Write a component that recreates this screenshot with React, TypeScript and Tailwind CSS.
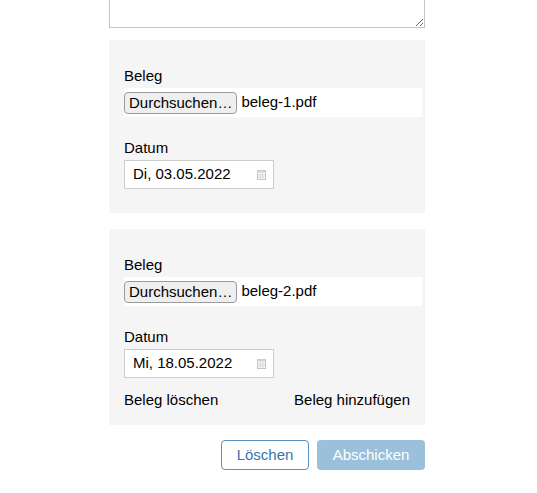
import React from 'react';

type Beleg = { file: string; date: string };

const BELEGE: Beleg[] = [
  { file: 'beleg-1.pdf', date: 'Di, 03.05.2022' },
  { file: 'beleg-2.pdf', date: 'Mi, 18.05.2022' },
];

function CalendarIcon() {
  return (
    <svg width="9" height="10" viewBox="0 0 9 10" className="shrink-0">
      <rect x="0.5" y="0.5" width="8" height="9" fill="none" stroke="#c4c4c4" />
      <rect x="0.5" y="0.5" width="8" height="2" fill="#d4d4d4" />
      <path d="M3.2 2.5V9.5M5.8 2.5V9.5M0.5 4.8H8.5M0.5 7.1H8.5" stroke="#d0d0d0" strokeWidth="0.8" />
    </svg>
  );
}

function BelegPanel({ beleg, last }: { beleg: Beleg; last: boolean }) {
  return (
    <div className={`bg-[#f5f5f5] px-[15px] pt-[25px] ${last ? 'pb-[15px]' : 'pb-[24px]'}`}>
      <label className="block leading-[21px] mb-[2px]">Beleg</label>
      <div className="flex items-center h-[29px] w-[298px] bg-white">
        <button
          type="button"
          className="h-[22px] px-[4px] leading-[20px] bg-[#efefef] border border-[#9a9a9a] rounded-[4px] text-black"
        >
          Durchsuchen…
        </button>
        <span className="ml-[4px]">{beleg.file}</span>
      </div>

      <label className="block leading-[21px] mt-[20px] mb-[2px]">Datum</label>
      <div className="flex items-center justify-between w-[150px] h-[29px] pl-[8px] pr-[7px] bg-white border border-[#cdcdcd]">
        <span>{beleg.date}</span>
        <CalendarIcon />
      </div>

      {last && (
        <div className="flex justify-between mt-[11px] leading-[21px]">
          <span>Beleg löschen</span>
          <span>Beleg hinzufügen</span>
        </div>
      )}
    </div>
  );
}

export default function App() {
  return (
    <div className="min-h-[493px] bg-white overflow-hidden text-[15px] text-black font-['Liberation_Sans',Arial,sans-serif]">
      <div className="ml-[109px] w-[316px]">
        <textarea className="block w-full -mt-[50px] h-[78px] border border-[#c4c4c4] bg-white" />

        <div className="mt-[12px] flex flex-col gap-[16px]">
          {BELEGE.map((b, i) => (
            <BelegPanel key={b.file} beleg={b} last={i === BELEGE.length - 1} />
          ))}
        </div>

        <div className="flex justify-end gap-[8px] mt-[15px]">
          <button
            type="button"
            className="w-[88px] h-[30px] rounded-[4px] border border-[#5b8fc0] bg-white text-[#3a74ab]"
          >
            Löschen
          </button>
          <button
            type="button"
            disabled
            className="w-[108px] h-[30px] rounded-[4px] bg-[#9ac0dc] text-white"
          >
            Abschicken
          </button>
        </div>
      </div>
    </div>
  );
}
